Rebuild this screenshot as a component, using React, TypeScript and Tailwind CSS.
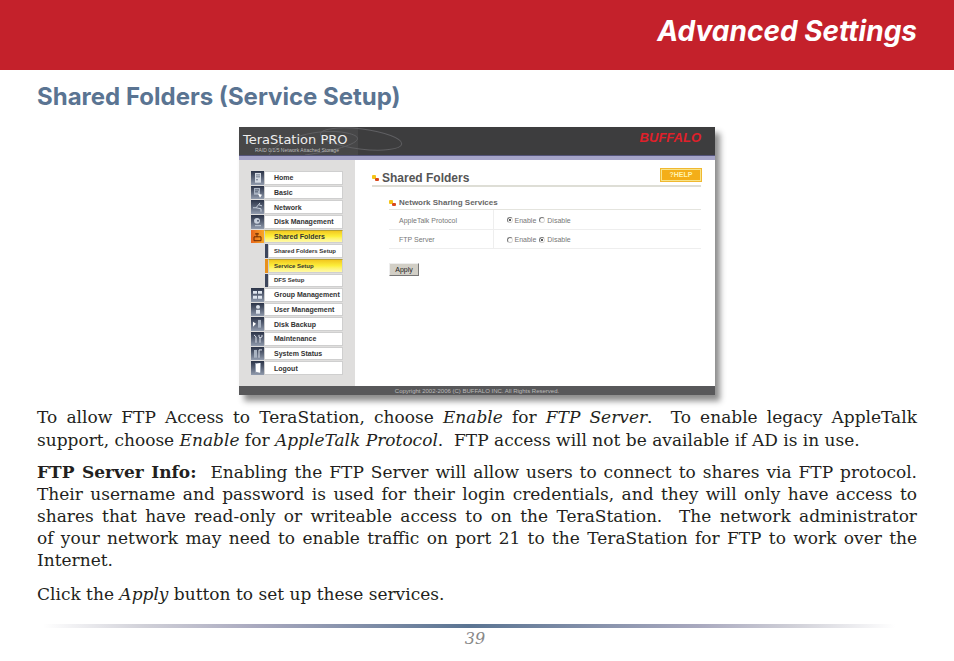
import React from 'react'
import clsx from 'clsx';

type NavItem = {
    label: string;
    icon?: React.ReactNode;
    sub?: boolean;
    active?: boolean;
}

const navItems: NavItem[] = [
    { label: 'Home', icon: <><path d="M4 2h6v10H4z" fill="#d5dbe4" /><path d="M5 4h4M5 6h4M5 9h2" stroke="#6d788a" /></> },
    { label: 'Basic', icon: <><path d="M3 2h6v7H3z" fill="#a9b3c2" /><path d="M4 4h4M4 6h3" stroke="#4b566a" /><path d="M7 8l4 1-2 3z" fill="#fff" /></> },
    { label: 'Network', icon: <path d="M2 8h3l4-5M5 8l5 1v3M8 5l3 1" fill="none" stroke="#c9d1dd" /> },
    { label: 'Disk Management', icon: <><circle cx="6" cy="6" r="3" fill="#c9d1dd" /><circle cx="7" cy="6" r="1" fill="#566176" /><path d="M4 11h6" stroke="#c9d1dd" /></> },
    { label: 'Shared Folders', active: true, icon: <><path d="M3 7h7v4H3z" fill="none" stroke="#6b2a00" /><path d="M6 7V3M4 4h4" stroke="#6b2a00" /></> },
    { label: 'Shared Folders Setup', sub: true },
    { label: 'Service Setup', sub: true, active: true },
    { label: 'DFS Setup', sub: true },
    { label: 'Group Management', icon: <path d="M2 3h4v3H2zM7 3h4v3H7zM2 8h4v3H2zM7 8h4v3H7z" fill="#dfe5ee" /> },
    { label: 'User Management', icon: <><circle cx="7" cy="4" r="2" fill="#dfe5ee" /><path d="M5 7h4v4H5z" fill="#dfe5ee" /></> },
    { label: 'Disk Backup', icon: <><path d="M2 5l3 2-3 3z" fill="#fff" /><path d="M7 3h3v8H7z" fill="#a9b3c2" /></> },
    { label: 'Maintenance', icon: <path d="M3 3l2 2v6M9 11V6M8 3v2l1 1 2-1V3" fill="none" stroke="#dfe5ee" /> },
    { label: 'System Status', icon: <><path d="M3 3h3v8H3z" fill="#a9b3c2" /><path d="M8 3v8M8 3h3" stroke="#dfe5ee" /></> },
    { label: 'Logout', icon: <><path d="M4 2h6v10H4z" fill="#98a2b3" /><path d="M5 3l4-1v10l-4-1z" fill="#fff" /></> },
];

const services = [
    { label: 'AppleTalk Protocol', name: 'appletalk', enabled: true },
    { label: 'FTP Server', name: 'ftp', enabled: false },
];

const Bullet: React.FC = () => (
    <svg viewBox="0 0 7 7" className="h-[7px] w-[7px] shrink-0" aria-hidden="true">
        <rect width="4" height="4" rx="1" fill="#f5c518" />
        <rect x="3" y="3" width="4" height="3" rx="1" fill="#d9481c" />
    </svg>
)

const NavRow: React.FC<{ item: NavItem }> = ({ item }) => (
    <li className={clsx('flex min-h-0', item.sub && 'pl-[14px]')}>
        {item.sub ? (
            <span className={clsx('w-[3px] shrink-0', item.active ? 'bg-[#e8901c]' : 'bg-[#3d465c]')} />
        ) : (
            <svg viewBox="0 0 13 14" preserveAspectRatio="none" className={clsx('h-full w-[13px] shrink-0', item.active ? 'bg-linear-to-r from-[#e8641c] to-[#f9a825]' : 'bg-linear-to-b from-[#2b3347] to-[#929cae]')} aria-hidden="true">
                {item.icon}
            </svg>
        )}
        <a
            href="#"
            className={clsx(
                'flex min-w-0 flex-1 items-center border border-[#cfcfcf] leading-none font-bold whitespace-nowrap text-[#333]',
                item.sub ? 'pl-[5px] text-[6px]' : 'pl-[9px] text-[7px]',
                item.active ? 'border-t-[#b5a030] bg-linear-to-b from-[#f2c81e] via-[#fdf03c] to-[#fff9a8]' : 'bg-white'
            )}
        >
            {item.label}
        </a>
    </li>
)

const Radio: React.FC<{ name: string; label: string; checked: boolean }> = ({ name, label, checked }) => (
    <label className="flex items-center gap-[2px]">
        <input
            type="radio"
            name={name}
            defaultChecked={checked}
            className="h-[6px] w-[6px] appearance-none rounded-full border border-[#777] border-r-[#ddd] border-b-[#ccc] bg-white checked:bg-[#222] checked:bg-clip-content checked:p-px"
        />
        {label}
    </label>
)

const AdminPanel: React.FC = () => (
    <div className="mx-auto w-[476px] bg-white font-['Liberation_Sans',Arial,sans-serif] shadow-[5px_6px_6px_rgba(0,0,0,0.45)]">
        <div className="relative flex h-[28px] justify-between overflow-hidden bg-linear-to-r from-[#474748] from-25% to-[#3d3d3e] to-25% pr-[14px] pl-[4px]">
            <svg viewBox="0 0 180 28" className="absolute top-0 left-0 h-[28px] w-[180px]" fill="none" stroke="#5f5f62" aria-hidden="true">
                <ellipse cx="122" cy="12" rx="41" ry="10" transform="rotate(7 122 12)" />
                <path d="M30 28C38 12 80 0 108 6s-5 17-42 22" />
            </svg>
            <div className="relative pt-[6px] text-[#eee]">
                <div className="font-['DejaVu_Sans',sans-serif] text-[13px] leading-[14px]">TeraStation PRO</div>
                <div className="pl-[12px] text-[5px] leading-[7px] whitespace-nowrap text-[#bbb]">RAID 0/1/5 Network Attached Storage</div>
            </div>
            <div className="relative pt-[4px] text-[13px] leading-[14px] font-bold text-[#e0202a] italic">BUFFALO</div>
        </div>
        <div className="h-[5px] border-t border-[#55557a] bg-[#a5a4c8]" />
        <div className="flex h-[226px]">
            <nav className="w-[116px] shrink-0 bg-[#dfdedd] pt-[11px] pr-[12px] pl-[12px]">
                <ul className="grid h-[204px] auto-rows-fr grid-cols-1 gap-px">
                    {navItems.map((item) => (
                        <NavRow key={item.label} item={item} />
                    ))}
                </ul>
            </nav>
            <main className="flex-1 pt-[8px] pr-[14px] pl-[17px] text-[7px] text-[#777]">
                <div className="flex h-[19px] items-center gap-[3px] border-b-2 border-[#deded6]">
                    <div className="flex flex-1 items-center gap-[3px] pt-[4px]">
                        <Bullet />
                        <h2 className="text-[12px] leading-[13px] font-bold text-[#555]">Shared Folders</h2>
                    </div>
                    <button className="mb-[4px] h-[12px] w-[40px] border border-[#f8e48a] bg-[#f4ae18] text-[7px] leading-none font-bold text-[#fff3b0] outline outline-[#f0b830]">?HELP</button>
                </div>
                <div className="pt-[10px] pl-[17px]">
                    <div className="flex h-[13px] items-center gap-[3px] border-b border-[#e4e4de]">
                        <Bullet />
                        <h3 className="text-[8px] leading-none font-bold text-[#666]">Network Sharing Services</h3>
                    </div>
                    <table className="w-full">
                        <tbody>
                            {services.map((service) => (
                                <tr key={service.name} className="h-[19px] border-b border-[#eee]">
                                    <th className="w-[104px] border-r border-[#eee] pt-[2px] pl-[10px] text-left leading-none font-normal">{service.label}</th>
                                    <td className="pt-[2px] pl-[13px] leading-none">
                                        <div className="flex gap-[3px]">
                                            <Radio name={service.name} label="Enable" checked={service.enabled} />
                                            <Radio name={service.name} label="Disable" checked={!service.enabled} />
                                        </div>
                                    </td>
                                </tr>
                            ))}
                        </tbody>
                    </table>
                    <button className="mt-[14px] block h-[13px] w-[30px] border border-[#eee] border-r-[#777] border-b-[#777] bg-[#d2cfc6] text-[7px] leading-none text-[#222]">Apply</button>
                </div>
            </main>
        </div>
        <footer className="h-[9px] bg-[#58585a] text-center text-[6px] leading-[10px] text-[#bbb]">
            Copyright 2002-2006 (C) BUFFALO INC. All Rights Reserved.
        </footer>
    </div>
)

const App: React.FC = () => {
    return (
        <div className="bg-white text-[#231f20]">
            <header className="h-[70px] bg-[#c4212b] px-[37px] pt-[12px] text-right">
                <h1 className="font-['Inter',sans-serif] text-[28px] leading-[38px] font-bold text-white italic">Advanced Settings</h1>
            </header>
            <div className="px-[37px] pt-[11px]">
                <h2 className="mb-[14px] font-['Inter',sans-serif] text-[24px] leading-[32px] font-bold text-[#5a7492]">Shared Folders (Service Setup)</h2>
                <AdminPanel />
                <div className="mt-[11px] text-justify font-['DejaVu_Serif',serif] text-[17px]">
                    <p className="leading-[23px]">
                        To allow FTP Access to TeraStation, choose <em>Enable</em> for <em>FTP Server</em>.&nbsp; To enable legacy AppleTalk support, choose <em>Enable</em> for <em>AppleTalk Protocol</em>.&nbsp; FTP access will not be available if AD is in use.
                    </p>
                    <p className="mt-[9px] leading-[22px]">
                        <strong>FTP Server Info:</strong>&nbsp; Enabling the FTP Server will allow users to connect to shares via FTP protocol. Their username and password is used for their login credentials, and they will only have access to shares that have read-only or writeable access to on the TeraStation.&nbsp; The network administrator of&nbsp;your network may need to enable traffic on port 21 to the TeraStation for FTP to work over the Internet.
                    </p>
                    <p className="mt-[12px] leading-[23px]">
                        Click the <em>Apply</em> button to set up these services.
                    </p>
                </div>
                <div className="mt-[18px] mr-[22px] ml-[6px] h-[4px] bg-[linear-gradient(to_right,#fff,#d0d0d8_12%,#a9a9bf_25%,#5a7492_50%,#a9a9bf_77%,#d0d0d8_88%,#fff)]" />
                <div className="pr-[4px] pt-px text-center font-['DejaVu_Serif',serif] text-[16px] leading-[20px] text-[#888] italic">39</div>
            </div>
        </div>
    )
}

export default App
